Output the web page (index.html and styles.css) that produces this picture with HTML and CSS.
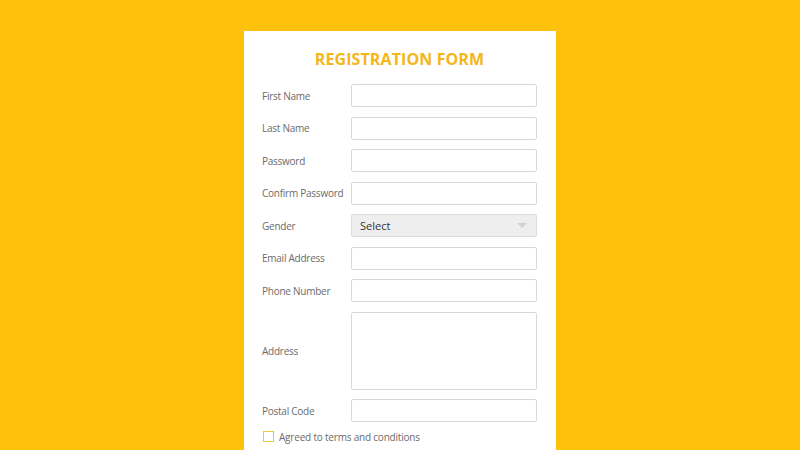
FILE: index.html
```html
<!DOCTYPE html>
<html>
<head>
<meta charset="utf-8">
<link rel="stylesheet" href="styles.css">
</head>
<body>
<div class="card">
  <h1 class="title">REGISTRATION FORM</h1>
  <form class="form">
    <div class="row"><label class="label">First Name</label><input class="field" type="text"></div>
    <div class="row"><label class="label">Last Name</label><input class="field" type="text"></div>
    <div class="row"><label class="label">Password</label><input class="field" type="password"></div>
    <div class="row"><label class="label">Confirm Password</label><input class="field" type="password"></div>
    <div class="row"><label class="label">Gender</label>
      <div class="select"><span>Select</span><span class="caret"></span></div>
    </div>
    <div class="row"><label class="label">Email Address</label><input class="field" type="text"></div>
    <div class="row"><label class="label">Phone Number</label><input class="field" type="text"></div>
    <div class="row"><label class="label">Address</label><textarea class="field area"></textarea></div>
    <div class="row"><label class="label">Postal Code</label><input class="field" type="text"></div>
    <div class="check"><span class="box"></span><span class="check-text">Agreed to terms and conditions</span></div>
  </form>
</div>
</body>
</html>
```
FILE: styles.css
```css
html, body {
  margin: 0;
  padding: 0;
  height: 100%;
  background: #fec10c;
  font-family: "Open Sans", "Noto Sans", sans-serif;
  overflow: hidden;
}
.card {
  width: 312px;
  margin: 31px auto 0;
  background: #ffffff;
  box-sizing: border-box;
  padding: 18px 19px 20px 18px;
  height: 419px;
}
.title {
  margin: 0;
  text-align: center;
  font-size: 16px;
  line-height: 20px;
  font-weight: 700;
  color: #f4b619;
  letter-spacing: 0.1px;
}
.form {
  margin-top: 15px;
  display: flex;
  flex-direction: column;
  gap: 9.5px;
}
.row {
  display: flex;
  align-items: center;
}
.label {
  width: 89px;
  flex: none;
  font-size: 10px;
  color: #6b6b6b;
  letter-spacing: -0.25px;
}
.field {
  width: 186px;
  height: 23px;
  box-sizing: border-box;
  border: 1px solid #d9d9d9;
  border-radius: 2px;
  background: #fff;
  margin: 0;
  padding: 0 6px;
  font-family: inherit;
}
.area {
  height: 78px;
  resize: none;
}
.select {
  width: 186px;
  height: 23px;
  box-sizing: border-box;
  border: 1px solid #dcdcdc;
  border-radius: 2px;
  background: #eeeeee;
  display: flex;
  align-items: center;
  justify-content: space-between;
  padding: 0 9px 0 8px;
  font-size: 11px;
  color: #333;
}
.caret {
  width: 0;
  height: 0;
  border-left: 5px solid transparent;
  border-right: 5px solid transparent;
  border-top: 5px solid #d2d2d2;
}
.check {
  display: flex;
  align-items: center;
  gap: 5px;
  margin-top: -1px;
  height: 12px;
}
.box {
  width: 9px;
  height: 9px;
  border: 1px solid #f0c640;
  margin-left: 1px;
  flex: none;
}
.check-text {
  font-size: 10px;
  line-height: 12px;
  color: #6b6b6b;
  letter-spacing: -0.2px;
}
```
